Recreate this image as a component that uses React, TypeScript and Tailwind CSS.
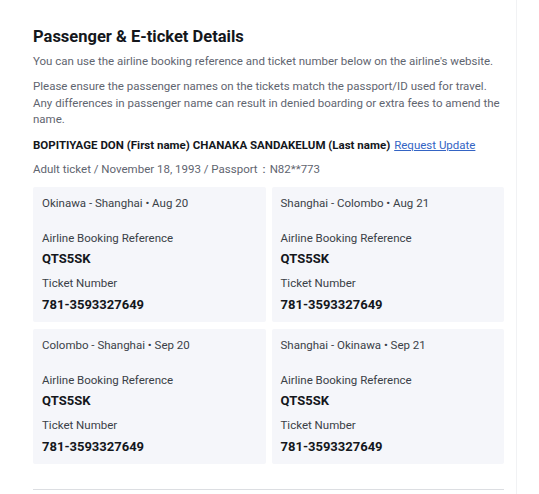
const segments = [
  { route: 'Okinawa - Shanghai • Aug 20' },
  { route: 'Shanghai - Colombo • Aug 21' },
  { route: 'Colombo - Shanghai • Sep 20' },
  { route: 'Shanghai - Okinawa • Sep 21' },
]

export default function App() {
  return (
    <div className="h-[494px] w-[539px] bg-white" style={{ fontFamily: 'Roboto, "Noto Sans", sans-serif' }}>
      <div className="h-full w-[517px] border-r border-[#f1f2f4] pl-[33px] pr-[12px] pt-[26px]">
        <div className="border-b border-[#dcdee2] pb-[25px]">
          <h2 className="text-[16.5px] font-bold leading-[22px] text-[#14171c]">Passenger &amp; E-ticket Details</h2>
          <p className="mt-[5px] text-[11.5px] leading-[17px] text-[#5f6570]">
            You can use the airline booking reference and ticket number below on the airline's website.
          </p>
          <p className="mt-[8px] text-[11.5px] leading-[16.5px] text-[#5f6570]">
            Please ensure the passenger names on the tickets match the passport/ID used for travel. Any differences in passenger name can result in denied boarding or extra fees to amend the name.
          </p>
          <p className="mt-[9px] text-[11.5px] font-bold leading-[17px] text-[#14171c]">
            BOPITIYAGE DON (First name) CHANAKA SANDAKELUM (Last name)
            <a className="ml-[4px] font-normal text-[#3464c4] underline">Request Update</a>
          </p>
          <p className="mt-[7px] text-[11.5px] leading-[17px] text-[#5f6570]">
            Adult ticket / November 18, 1993 / Passport：N82**773
          </p>
          <div className="mt-[9px] grid grid-cols-2 gap-x-[6px] gap-y-[7px]">
            {segments.map((s) => (
              <div key={s.route} className="h-[135px] rounded-[2px] bg-[#f5f6fa] px-[9px] pt-[8px]">
                <div className="text-[11.5px] leading-[16px] text-[#3a3f47]">{s.route}</div>
                <div className="mt-[19px] text-[11.5px] leading-[16px] text-[#3a3f47]">Airline Booking Reference</div>
                <div className="mt-[5px] text-[13px] font-bold leading-[16px] text-[#14171c]">QTS5SK</div>
                <div className="mt-[8px] text-[11.5px] leading-[16px] text-[#3a3f47]">Ticket Number</div>
                <div className="mt-[6px] text-[13px] font-bold leading-[16px] text-[#14171c]">781-3593327649</div>
              </div>
            ))}
          </div>
        </div>
      </div>
    </div>
  )
}
